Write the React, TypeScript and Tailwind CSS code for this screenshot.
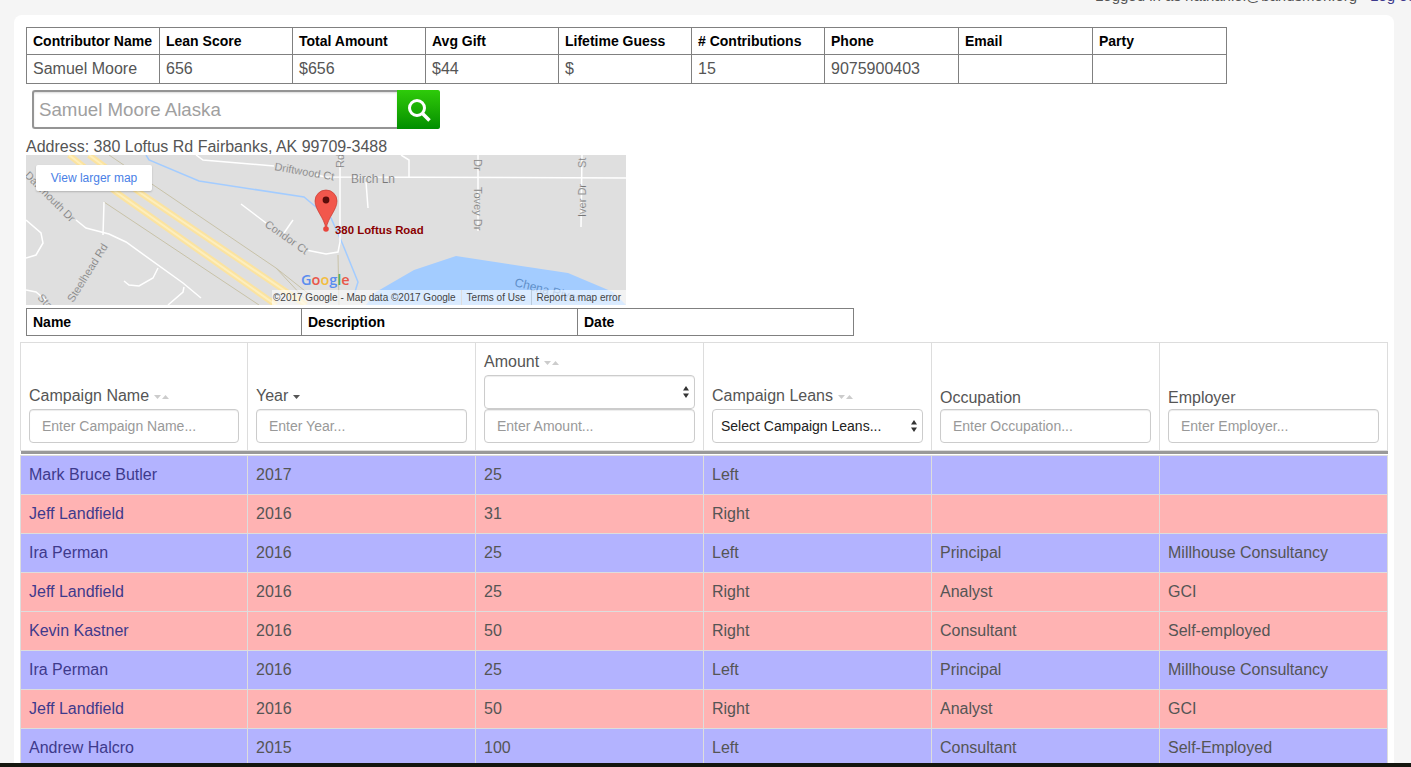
const summaryHead = ["Contributor Name", "Lean Score", "Total Amount", "Avg Gift", "Lifetime Guess", "# Contributions", "Phone", "Email", "Party"];
const summaryRow = ["Samuel Moore", "656", "$656", "$44", "$", "15", "9075900403", "", ""];
const summaryCols = [133, 133, 133, 133, 133, 133, 134, 134, 134];

const rows = [
  ["Mark Bruce Butler", "2017", "25", "Left", "", ""],
  ["Jeff Landfield", "2016", "31", "Right", "", ""],
  ["Ira Perman", "2016", "25", "Left", "Principal", "Millhouse Consultancy"],
  ["Jeff Landfield", "2016", "25", "Right", "Analyst", "GCI"],
  ["Kevin Kastner", "2016", "50", "Right", "Consultant", "Self-employed"],
  ["Ira Perman", "2016", "25", "Left", "Principal", "Millhouse Consultancy"],
  ["Jeff Landfield", "2016", "50", "Right", "Analyst", "GCI"],
  ["Andrew Halcro", "2015", "100", "Left", "Consultant", "Self-Employed"],
];

function SortCaret({ active = false }: { active?: boolean }) {
  return (
    <svg width="16" height="6" viewBox="0 0 16 6" className="ml-[5px] inline-block">
      <path d="M0 1h7L3.5 5z" fill={active ? "#555" : "#ccc"} />
      {!active && <path d="M8 5h7L11.5 1z" fill="#ccc" />}
    </svg>
  );
}

function SelectArrows() {
  return (
    <svg width="8" height="14" viewBox="0 0 8 14" className="absolute right-[4px] top-1/2 -translate-y-1/2">
      <path d="M4 1l3 4.5H1z M4 13l3-4.5H1z" fill="#333" />
    </svg>
  );
}

function TextFilter({ placeholder }: { placeholder: string }) {
  return (
    <input
      readOnly
      placeholder={placeholder}
      className="block h-[34px] w-full rounded-[4px] border border-[#ccc] bg-white px-[12px] text-[14px] shadow-[inset_0_1px_1px_rgba(0,0,0,0.075)] outline-none placeholder:text-[#999]"
    />
  );
}

function MapPanel() {
  return (
    <div className="relative h-[150px] w-[600px] overflow-hidden bg-[#dfdfdf]">
      <svg width="600" height="150" viewBox="0 0 600 150" className="block">
        {/* water */}
        <path d="M340 150 L350 137 L388 115 L430 101 L542 118 L587 137 L600 150 Z" fill="#a3ccff" />
        <path d="M120 0 L123 5 L173 26 L278 42 L290 52 L305 63 L317 90 L332 127 L328 140" fill="none" stroke="#a3ccff" strokeWidth="1.5" />
        {/* rail lines */}
        <g fill="none" stroke="#c8c2a8" strokeWidth="1">
          <path d="M83 0 L250 113 L293 147" />
          <path d="M78 47 L233 150" />
          <path d="M250 113 L278 143" />
          <path d="M312 100 L313 150" />
        </g>
        {/* highway */}
        <g fill="none" strokeLinecap="butt">
          <path d="M43 0 L90 37 L250 150" stroke="#fbe3a0" strokeWidth="6" />
          <path d="M63 0 L113 37 L280 150" stroke="#fbe3a0" strokeWidth="6" />
          <path d="M43 0 L90 37 L250 150" stroke="#fdeebc" strokeWidth="2" />
          <path d="M63 0 L113 37 L280 150" stroke="#fdeebc" strokeWidth="2" />
        </g>
        {/* roads */}
        <g fill="none" stroke="#fff" strokeWidth="1.5">
          <path d="M170 0 L177 5 L248 11 M290 20 L300 22 L600 23" />
          <path d="M375 0 L383 5 L383 23" />
          <path d="M340 27 L342 53" />
          <path d="M452 0 L452 76" />
          <path d="M556 0 L555 72" />
          <path d="M314 0 L314 87 L312 97 L300 99 L280 95" />
          <path d="M215 49 L240 68" />
          <path d="M267 65 L258 78" />
          <path d="M50 65 L60 73 L83 79 L100 87 L157 128 L175 143" />
          <path d="M78 47 L77 80" />
          <path d="M132 113 L127 123 L113 131 L103 130 L98 126" />
          <path d="M158 132 L157 137 L142 150" />
          <path d="M0 65 L15 78 L17 88 L10 100 L0 103" />
          <path d="M0 135 L10 137 L22 147" />
        </g>
        {/* road labels */}
        <g fill="#777" fontSize="11" fontFamily="'Liberation Sans', sans-serif" stroke="#dfdfdf" strokeWidth="0.2">
          <text transform="translate(248 15) rotate(10)">Driftwood Ct</text>
          <text x="325" y="28" fontSize="12">Birch Ln</text>
          <text transform="translate(318 13) rotate(-90)">Rd</text>
          <text transform="translate(448 4) rotate(90)">Dr</text>
          <text transform="translate(448 32) rotate(90)">Tovey Dr</text>
          <text transform="translate(560 13) rotate(-90)">St</text>
          <text transform="translate(560 62) rotate(-90)">Iver Dr</text>
          <text transform="translate(238 71) rotate(35)">Condor Ct</text>
          <text transform="translate(-2 21) rotate(45)">Dartmouth Dr</text>
          <text transform="translate(47 148) rotate(-58)">Steelhead Rd</text>
          <text transform="translate(11 143) rotate(48)">Sta</text>
        </g>
        <text transform="translate(488 131) rotate(14)" fill="#5f8fc9" fontSize="12" fontFamily="'Liberation Sans', sans-serif">Chena River</text>
        {/* pin */}
        <path d="M300 74 C298 62 289 55 289 46 A11 11 0 1 1 311 46 C311 55 302 62 300 74 Z" fill="#f2574c" stroke="#c5392f" strokeWidth="0.7" />
        <circle cx="300" cy="45" r="3.4" fill="#5a0d0a" />
        <circle cx="300" cy="74" r="2.8" fill="#e8453c" />
        <text x="309" y="79" fill="#8a0000" fontSize="11.4" fontWeight="700" fontFamily="'Liberation Sans', sans-serif">380 Loftus Road</text>
        {/* google logo */}
        <text x="275" y="130" fontSize="14.5" fontWeight="600" fontFamily="'Open Sans', sans-serif">
          <tspan fill="#5b8def">G</tspan>
          <tspan fill="#e8574a">o</tspan>
          <tspan fill="#f3bd3e">o</tspan>
          <tspan fill="#5b8def">g</tspan>
          <tspan fill="#4fae5b">l</tspan>
          <tspan fill="#e8574a">e</tspan>
        </text>
      </svg>
      <div className="absolute left-[10px] top-[10px] flex h-[26px] w-[116px] items-center justify-center rounded-[2px] bg-white text-[12px] text-[#4a7fe6] shadow-[0_1px_2px_rgba(0,0,0,0.2)]">
        View larger map
      </div>
      <div className="absolute bottom-0 right-0 flex h-[15px] w-[354px] items-center justify-end whitespace-nowrap bg-white/60 pr-[5px] text-[10px] text-[#444]">
        <span>©2017 Google - Map data ©2017 Google</span>
        <span className="mx-[5px] h-full border-l border-[#ddd]" />
        <span>Terms of Use</span>
        <span className="mx-[5px] h-full border-l border-[#bcd]" />
        <span>Report a map error</span>
      </div>
    </div>
  );
}

export default function App() {
  return (
    <div className="flex h-[767px] flex-col overflow-hidden bg-[#f5f5f5] font-['Liberation_Sans',Arial,sans-serif] text-[16px] text-[#555]">
      <div className="flex-1 overflow-hidden">
        <div className="-mt-[14px] flex h-[29px] whitespace-nowrap pl-[1095px] text-[15px] leading-[20px]">
          <span>Logged in as nathaniel@bandsmen.org</span>
          <span className="ml-[13px] text-[#3e3a8c]">Log out</span>
        </div>

        <div className="ml-[14px] w-[1380px] rounded-t-[8px] bg-white pl-[12px] pt-[12px]">
          <table className="w-[1200px] table-fixed border-collapse border border-[#808080]">
            <colgroup>
              {summaryCols.map((w, i) => (
                <col key={i} style={{ width: w }} />
              ))}
            </colgroup>
            <tbody>
              <tr className="h-[27px]">
                {summaryHead.map((h) => (
                  <th key={h} className="border border-[#808080] pl-[6px] text-left text-[14px] font-bold text-black">{h}</th>
                ))}
              </tr>
              <tr className="h-[29px]">
                {summaryRow.map((c, i) => (
                  <td key={i} className="border border-[#808080] pl-[6px]">{c}</td>
                ))}
              </tr>
            </tbody>
          </table>

          <div className="ml-[6px] mt-[6px] flex h-[39px] w-[408px]">
            <div className="flex flex-1 items-center rounded-l-[3px] border-2 border-r-0 border-[#949494] pl-[5px] pt-[2px] text-[18.7px] text-[#a0a0a0] shadow-[inset_0_1px_2px_rgba(0,0,0,0.15)]">
              Samuel Moore Alaska
            </div>
            <div className="flex w-[43px] items-center justify-center rounded-r-[2px] bg-gradient-to-b from-[#2ecb0a] to-[#008f00]">
              <svg width="26" height="26" viewBox="0 0 26 26" fill="none" stroke="#fff">
                <circle cx="11" cy="11" r="7.5" strokeWidth="3" />
                <path d="M16.5 16.5L23.5 23.5" strokeWidth="3.6" />
              </svg>
            </div>
          </div>

          <div className="mt-[9px] h-[17px] leading-[18px]">Address: 380 Loftus Rd Fairbanks, AK 99709-3488</div>

          <MapPanel />

          <table className="mt-[3px] w-[827px] table-fixed border-collapse border border-[#808080]">
            <colgroup>
              <col className="w-[275px]" />
              <col className="w-[276px]" />
              <col className="w-[276px]" />
            </colgroup>
            <tbody>
              <tr className="h-[27px]">
                {["Name", "Description", "Date"].map((h) => (
                  <th key={h} className="border border-[#808080] pl-[6px] text-left text-[14px] font-bold text-black">{h}</th>
                ))}
              </tr>
            </tbody>
          </table>

          <table className="-ml-[6px] mt-[6px] w-[1367px] table-fixed border-collapse">
            <colgroup>
              <col className="w-[227px]" />
              <col className="w-[228px]" />
              <col className="w-[228px]" />
              <col className="w-[228px]" />
              <col className="w-[228px]" />
              <col className="w-[228px]" />
            </colgroup>
            <thead>
              <tr>
                <th className="h-[108px] border border-[#ddd] px-[8px] pb-[7px] align-bottom text-left font-normal">
                  <div className="mb-[2px] h-[22px] leading-[22px]">Campaign Name<SortCaret /></div>
                  <TextFilter placeholder="Enter Campaign Name..." />
                </th>
                <th className="border border-[#ddd] px-[8px] pb-[7px] align-bottom text-left font-normal">
                  <div className="mb-[2px] h-[22px] leading-[22px]">Year<SortCaret active /></div>
                  <TextFilter placeholder="Enter Year..." />
                </th>
                <th className="border border-[#ddd] px-[8px] pb-[7px] align-bottom text-left font-normal">
                  <div className="mb-[2px] h-[22px] leading-[22px]">Amount<SortCaret /></div>
                  <div className="relative h-[34px] rounded-[4px] border border-[#ccc] bg-white shadow-[inset_0_1px_1px_rgba(0,0,0,0.075)]">
                    <SelectArrows />
                  </div>
                  <TextFilter placeholder="Enter Amount..." />
                </th>
                <th className="border border-[#ddd] px-[8px] pb-[7px] align-bottom text-left font-normal">
                  <div className="mb-[2px] h-[22px] leading-[22px]">Campaign Leans<SortCaret /></div>
                  <div className="relative flex h-[34px] items-center rounded-[4px] border border-[#ccc] bg-white pl-[8px] text-[14px] text-[#222]">
                    Select Campaign Leans...
                    <SelectArrows />
                  </div>
                </th>
                <th className="border border-[#ddd] px-[8px] pb-[7px] align-bottom text-left font-normal">
                  <div className="h-[22px] leading-[22px]">Occupation</div>
                  <TextFilter placeholder="Enter Occupation..." />
                </th>
                <th className="border border-[#ddd] px-[8px] pb-[7px] align-bottom text-left font-normal">
                  <div className="h-[22px] leading-[22px]">Employer</div>
                  <TextFilter placeholder="Enter Employer..." />
                </th>
              </tr>
              <tr>
                <th colSpan={6} className="h-[3px] bg-[#999] p-0" />
              </tr>
              <tr>
                <th colSpan={6} className="h-[2px] p-0" />
              </tr>
            </thead>
            <tbody>
              {rows.map((r, i) => (
                <tr key={i} className={`h-[39px] ${r[3] === "Left" ? "bg-[#b3b3ff]" : "bg-[#ffb3b3]"}`}>
                  {r.map((c, j) => (
                    <td key={j} className={`border border-[#ddd] px-[8px] ${j === 0 ? "text-[#3e3a8c]" : ""}`}>{c}</td>
                  ))}
                </tr>
              ))}
            </tbody>
          </table>
        </div>
      </div>
      <div className="h-[4px] shrink-0 bg-[#14160f]" />
    </div>
  );
}
